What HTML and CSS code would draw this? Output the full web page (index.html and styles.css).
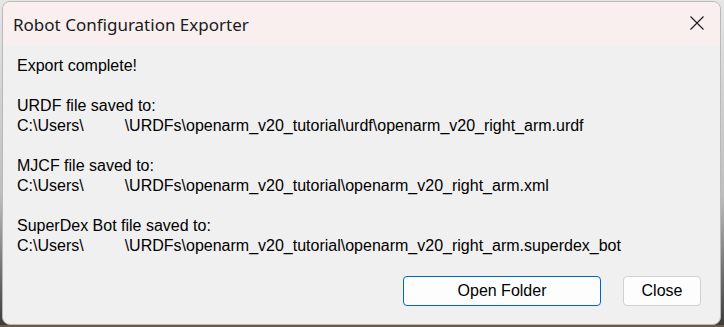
FILE: index.html
```html
<!DOCTYPE html>
<html>
<head>
<meta charset="utf-8">
<link rel="stylesheet" href="styles.css">
</head>
<body>
<div class="window">
  <div class="titlebar">
    <span class="title">Robot Configuration Exporter</span>
    <svg class="close-x" width="14" height="14" viewBox="0 0 14 14"><path d="M0.5 0.5 L13.5 13.5 M13.5 0.5 L0.5 13.5" stroke="#1a1a1a" stroke-width="1.1" fill="none"/></svg>
  </div>
  <div class="content">
    <div class="messages">
      <p class="line">Export complete!</p>
      <p class="line blank"></p>
      <p class="line">URDF file saved to:</p>
      <p class="line">C:\Users\<span class="redact"></span>\URDFs\openarm_v20_tutorial\urdf\openarm_v20_right_arm.urdf</p>
      <p class="line blank"></p>
      <p class="line">MJCF file saved to:</p>
      <p class="line">C:\Users\<span class="redact"></span>\URDFs\openarm_v20_tutorial\openarm_v20_right_arm.xml</p>
      <p class="line blank"></p>
      <p class="line">SuperDex Bot file saved to:</p>
      <p class="line">C:\Users\<span class="redact"></span>\URDFs\openarm_v20_tutorial\openarm_v20_right_arm.superdex_bot</p>
    </div>
    <div class="buttons">
      <button class="btn primary">Open Folder</button>
      <button class="btn">Close</button>
    </div>
  </div>
</div>
<div class="desktop"></div>
</body>
</html>
```
FILE: styles.css
```css
html, body {
  margin: 0;
  padding: 0;
}
body {
  width: 724px;
  height: 327px;
  overflow: hidden;
  background: linear-gradient(to bottom, #e6e6e6 0%, #bdbdbd 60%, #3a3a3a 100%);
  display: flex;
  flex-direction: column;
}
.window {
  margin: 1px 3px 0 2px;
  height: 322px;
  border: 1px solid #b9b9b9;
  border-radius: 8px;
  background: #f0f0f0;
  overflow: hidden;
  display: flex;
  flex-direction: column;
}
.titlebar {
  height: 43px;
  flex: none;
  background: #f8efee;
  display: flex;
  align-items: center;
  justify-content: space-between;
  padding: 0 16px 0 10px;
}
.title {
  font-family: "Noto Sans", sans-serif;
  font-size: 17px;
  color: #1a1a1a;
  padding-top: 1px;
}
.close-x {
  display: block;
  margin-top: -1px;
}
.content {
  flex: 1;
  display: flex;
  flex-direction: column;
  padding: 11px 0 0 14px;
}
.messages {
  font-family: "Liberation Sans", Arial, sans-serif;
  font-size: 16px;
  color: #000;
}
.line {
  margin: 0;
  height: 20px;
  line-height: 20px;
  white-space: pre;
}
.redact {
  display: inline-block;
  width: 41px;
}
.buttons {
  display: flex;
  justify-content: flex-end;
  gap: 22px;
  padding: 20px 19px 0 0;
}
.btn {
  font-family: "Liberation Sans", Arial, sans-serif;
  font-size: 16px;
  color: #000;
  background: #fdfdfd;
  border: 1px solid #d0d0d0;
  border-radius: 4px;
  height: 30px;
  width: 78px;
  padding: 0;
}
.btn.primary {
  width: 198px;
  border-color: #0067c0;
}
.desktop {
  flex: 1;
  background: #6b5a44;
}
```
